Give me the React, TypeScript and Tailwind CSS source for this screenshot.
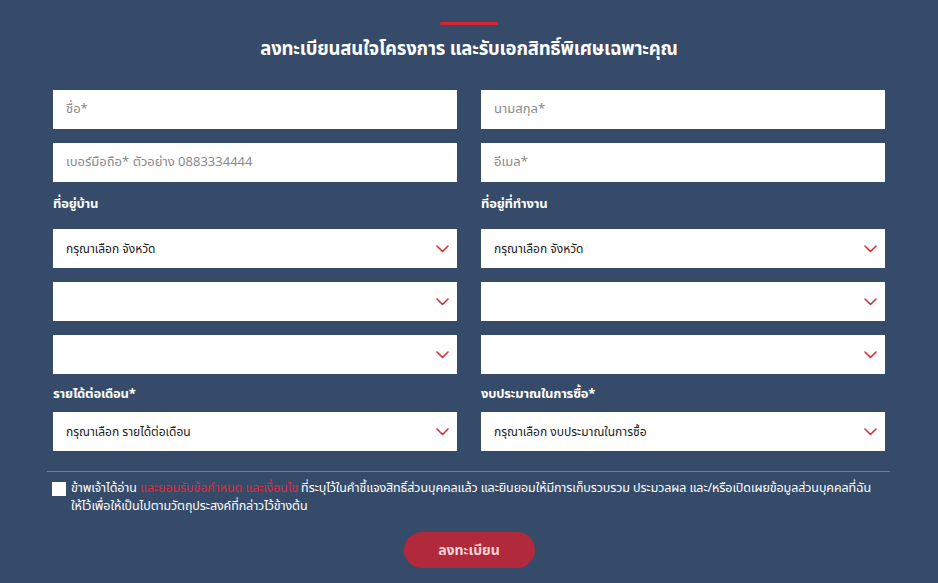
import React from "react";

const Chevron = () => (
  <svg width="13" height="8" viewBox="0 0 13 8" fill="none" className="shrink-0">
    <polyline points="1,1 6.5,6.5 12,1" stroke="#d6303a" strokeWidth="1.6" strokeLinecap="round" strokeLinejoin="round" />
  </svg>
);

const TextInput = ({ placeholder }: { placeholder: string }) => (
  <div className="h-[39px] bg-white flex items-center pl-[13px]">
    <input
      className="w-full outline-none text-[13px] text-[#333] placeholder:text-[#8a8a8a] bg-transparent"
      placeholder={placeholder}
    />
  </div>
);

const Select = ({ value }: { value?: string }) => (
  <div className="h-[39px] bg-white flex items-center justify-between pl-[13px] pr-[8px]">
    <span className="text-[12px] text-[#222]">{value}</span>
    <Chevron />
  </div>
);

const Label = ({ children }: { children: React.ReactNode }) => (
  <div className="h-5 flex items-center text-[13px] font-bold text-white tracking-[-0.2px]">{children}</div>
);

export default function App() {
  return (
    <div
      className="w-[938px] h-[583px] bg-[#364b6a] overflow-hidden pt-[22px]"
      style={{ fontFamily: '"Noto Sans Thai", "Noto Sans", "Liberation Sans", sans-serif' }}
    >
      <div className="w-[58px] h-[3px] rounded-full bg-[#d9232d] mx-auto" />
      <h2 className="mt-[10px] h-[28px] leading-[28px] text-center text-white font-bold text-[18.5px] tracking-[-0.2px]">
        ลงทะเบียนสนใจโครงการ และรับเอกสิทธิ์พิเศษเฉพาะคุณ
      </h2>

      <div className="mt-[27px] mx-[53px] grid grid-cols-2 gap-x-[24px]">
        {/* ซ้าย */}
        <div className="flex flex-col">
          <TextInput placeholder="ชื่อ*" />
          <div className="mt-[14px]">
            <TextInput placeholder="เบอร์มือถือ* ตัวอย่าง 0883334444" />
          </div>
          <div className="mt-[13px] mb-[14px]">
            <Label>ที่อยู่บ้าน</Label>
          </div>
          <div className="flex flex-col gap-[14px]">
            <Select value="กรุณาเลือก จังหวัด" />
            <Select />
            <Select />
          </div>
          <div className="mt-[11px] mb-[7px]">
            <Label>รายได้ต่อเดือน*</Label>
          </div>
          <Select value="กรุณาเลือก รายได้ต่อเดือน" />
        </div>

        {/* ขวา */}
        <div className="flex flex-col">
          <TextInput placeholder="นามสกุล*" />
          <div className="mt-[14px]">
            <TextInput placeholder="อีเมล*" />
          </div>
          <div className="mt-[13px] mb-[14px]">
            <Label>ที่อยู่ที่ทำงาน</Label>
          </div>
          <div className="flex flex-col gap-[14px]">
            <Select value="กรุณาเลือก จังหวัด" />
            <Select />
            <Select />
          </div>
          <div className="mt-[11px] mb-[7px]">
            <Label>งบประมาณในการซื้อ*</Label>
          </div>
          <Select value="กรุณาเลือก งบประมาณในการซื้อ" />
        </div>
      </div>

      <div className="mt-[20px] ml-[47px] mr-[48px] h-px bg-[#6f7d92]" />

      <div className="mt-[8px] mx-[52px] flex items-start gap-[5px]">
        <div className="w-[14px] h-[14px] bg-white mt-[2px] shrink-0" />
        <p className="text-[12.5px] leading-[18px] text-white tracking-[-0.1px]">
          ข้าพเจ้าได้อ่าน <span className="text-[#e0283a]">และยอมรับข้อกำหนด และเงื่อนไข</span> ที่ระบุไว้ในคำชี้แจงสิทธิ์ส่วนบุคคลแล้ว และยินยอมให้มีการเก็บรวบรวม ประมวลผล และ/หรือเปิดเผยข้อมูลส่วนบุคคลที่ฉัน
          <br />
          ให้ไว้เพื่อให้เป็นไปตามวัตถุประสงค์ที่กล่าวไว้ข้างต้น
        </p>
      </div>

      <div className="mt-[16px] flex justify-center">
        <button className="w-[131px] h-[36px] rounded-full bg-[#b02a3b] text-[#f3d6da] text-[14px] font-bold">
          ลงทะเบียน
        </button>
      </div>
    </div>
  );
}
